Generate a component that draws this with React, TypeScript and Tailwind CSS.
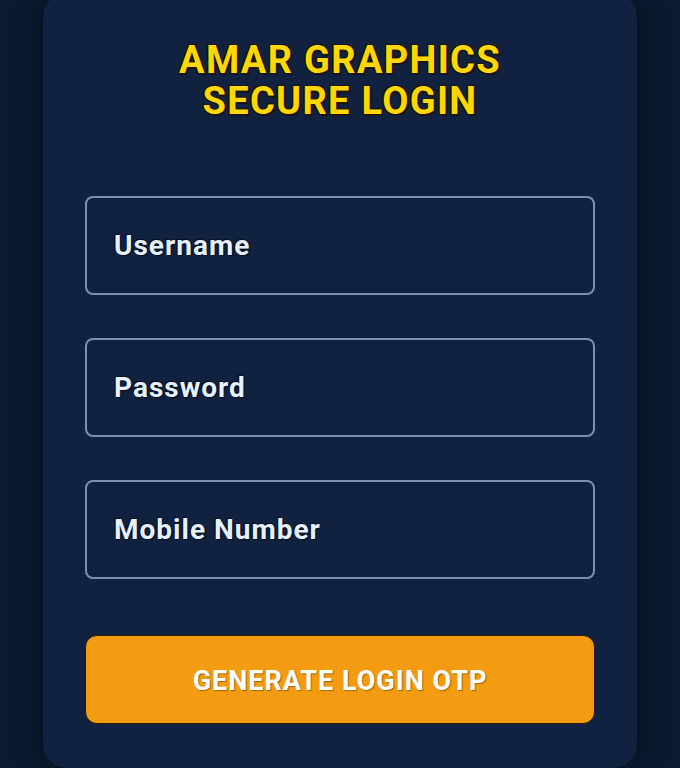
import React from "react";

export default function App() {
  const inputCls =
    "w-full h-[99px] rounded-[8px] border-2 border-[#7f8fb3] bg-transparent px-[27px] text-[28px] font-bold text-[#e6f1ff] placeholder:text-[#e6f1ff] outline-none [text-shadow:1px_1px_1px_#050c1a,-1px_-1px_1px_#050c1a] tracking-[1px]";
  return (
    <div
      className="min-h-screen w-full bg-[#0b1a31] flex justify-center overflow-hidden"
      style={{ fontFamily: "Roboto, 'Liberation Sans', sans-serif" }}
    >
      <div className="w-[594px] mt-[-7px] rounded-[24px] bg-[#112240] shadow-[0_0_30px_rgba(0,0,0,0.45)] px-[42px] pt-[47px] pb-[42px] flex flex-col">
        <h1 className="text-center text-[38px] leading-[41px] font-bold tracking-[1.3px] text-[#ffd700] [text-shadow:2px_2px_0_#1a1400,-1px_-1px_0_#1a1400,1px_-1px_0_#1a1400,-1px_1px_0_#1a1400]">
          AMAR GRAPHICS
          <br />
          SECURE LOGIN
        </h1>
        <div className="mt-[74px] flex flex-col gap-[43px]">
          <input className={inputCls} placeholder="Username" />
          <input className={inputCls} placeholder="Password" type="password" />
          <input className={inputCls} placeholder="Mobile Number" />
        </div>
        <button className="mt-[56px] h-[89px] w-full rounded-[12px] bg-[#f39c12] border border-[#2a1d05] pt-[3px] text-white text-[27px] font-bold tracking-[1px] [text-shadow:1px_1px_1px_rgba(0,0,0,0.35)]">
          GENERATE LOGIN OTP
        </button>
      </div>
    </div>
  );
}
